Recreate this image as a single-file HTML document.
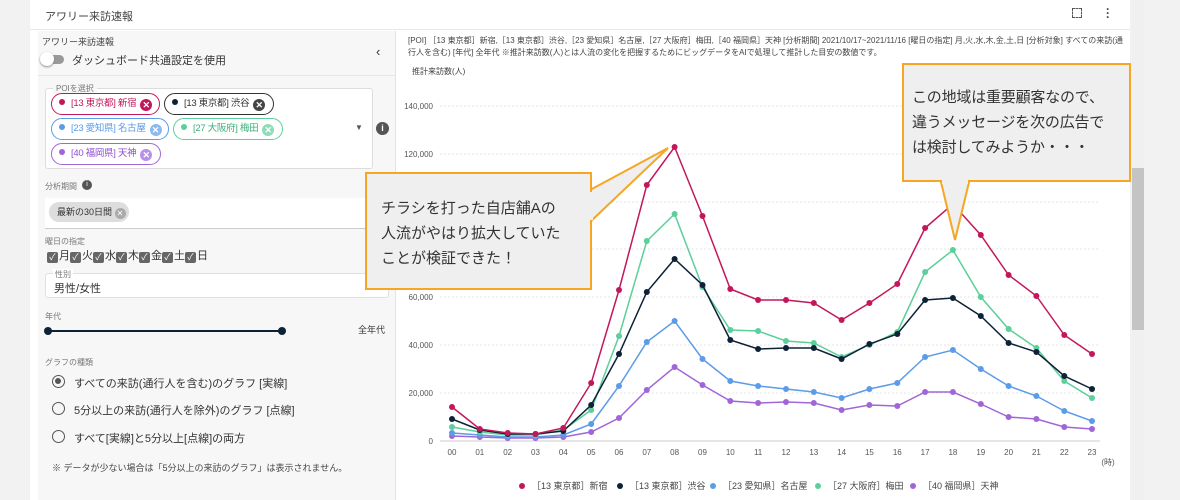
<!DOCTYPE html>
<html><head><meta charset="utf-8"><style>
*{box-sizing:border-box;margin:0;padding:0}
body{width:1180px;height:500px;background:#f2f2f2;font-family:"Liberation Sans","Noto Sans CJK JP",sans-serif;color:#333;position:relative;overflow:hidden}
.a{position:absolute}
.card{left:30px;top:0;width:1100px;height:500px;background:#fff}
.side{left:38px;top:31px;width:357px;height:469px;background:#f7f7f7}
.chip{position:absolute;height:22px;border-radius:11px;font-size:9.5px;line-height:20px;padding:0 5px 0 7px;border:1px solid;background:#fff;white-space:nowrap;letter-spacing:-0.3px}
.chip i{display:inline-block;width:6px;height:6px;border-radius:50%;margin-right:6px;vertical-align:1px}
.chip b{display:inline-block;width:12px;height:12px;border-radius:50%;color:#fff;font-size:9px;line-height:12px;text-align:center;margin-left:4px;vertical-align:-2px;letter-spacing:0}
.lbl{font-size:8px;color:#777}
.cb{display:inline-block;width:11px;height:11px;background:#666;border-radius:2px;color:#fff;font-size:9px;line-height:11px;text-align:center;margin-right:1px;vertical-align:-1px}
.rad{position:absolute;left:52px;width:13px;height:13px;border:1.5px solid #555;border-radius:50%}
.rt{position:absolute;left:74px;font-size:11px;color:#333}
.bub{background:#efefef;border:2px solid #f5a623;font-size:15px;line-height:25px;color:#333}
</style></head><body>
<div class="a card"></div>
<div class="a" style="left:45px;top:8px;font-size:11px;color:#444">アワリー来訪速報</div>
<div class="a" style="left:30px;top:29px;width:1100px;height:1px;background:#e8e8e8"></div>
<div class="a" style="left:1072px;top:8px;width:10px;height:10px;border:1.5px dashed #555"></div>
<div class="a" style="left:1106px;top:7px;font-size:12px;line-height:4px;color:#444;font-weight:bold">·<br>·<br>·</div>
<div class="a" style="left:1132px;top:0;width:12px;height:500px;background:#f0f0f0"></div>
<div class="a" style="left:1132px;top:168px;width:12px;height:162px;background:#c4c4c4"></div>
<div class="a side"></div>
<div class="a" style="left:395px;top:31px;width:1px;height:469px;background:#e3e3e3"></div>
<div class="a" style="left:42px;top:35px;font-size:9px;color:#444">アワリー来訪速報</div>
<div class="a" style="left:42px;top:55px;width:22px;height:9px;border-radius:5px;background:#999"></div>
<div class="a" style="left:40px;top:52px;width:14px;height:14px;border-radius:50%;background:#fff;box-shadow:0 1px 2px #888"></div>
<div class="a" style="left:72px;top:52px;font-size:11px;color:#333">ダッシュボード共通設定を使用</div>
<div class="a" style="left:376px;top:44px;font-size:13px;color:#333">‹</div>
<div class="a" style="left:38px;top:75px;width:357px;height:1px;background:#e6e6e6"></div>
<div class="a" style="left:45px;top:88px;width:328px;height:81px;border:1px solid #ddd;background:#fff;border-radius:3px"></div>
<div class="a lbl" style="left:53px;top:83px;background:#f7f7f7;padding:0 3px">POIを選択</div>
<div class="chip" style="left:51px;top:93px;width:109px;border-color:#c2185b;color:#c2185b"><i style="background:#c2185b"></i>[13 東京都] 新宿<b style="background:#c2185b">✕</b></div>
<div class="chip" style="left:164px;top:93px;width:110px;border-color:#333;color:#333"><i style="background:#0d2137"></i>[13 東京都] 渋谷<b style="background:#444">✕</b></div>
<div class="chip" style="left:51px;top:118px;width:118px;border-color:#5b9be8;color:#5b9be8"><i style="background:#5b9be8"></i>[23 愛知県] 名古屋<b style="background:#8bb9f0">✕</b></div>
<div class="chip" style="left:173px;top:118px;width:110px;border-color:#5ccf9a;color:#3cae7a"><i style="background:#5ccf9a"></i>[27 大阪府] 梅田<b style="background:#8fdcb8">✕</b></div>
<div class="chip" style="left:51px;top:143px;width:110px;border-color:#a066d8;color:#9050d0"><i style="background:#a066d8"></i>[40 福岡県] 天神<b style="background:#b890e5">✕</b></div>
<div class="a" style="left:355px;top:123px;font-size:8px;color:#555">▼</div>
<div class="a" style="left:376px;top:122px;width:13px;height:13px;border-radius:50%;background:#555;color:#fff;font-size:9px;line-height:13px;text-align:center;font-weight:bold">i</div>
<div class="a lbl" style="left:45px;top:181px">分析期間</div>
<div class="a" style="left:82px;top:180px;width:10px;height:10px;border-radius:50%;background:#555;color:#fff;font-size:7px;line-height:10px;text-align:center">i</div>
<div class="a" style="left:45px;top:198px;width:344px;height:31px;background:#fff;border-bottom:1px solid #ccc"></div>
<div class="a" style="left:49px;top:202px;width:80px;height:20px;border-radius:10px;background:#ddd;font-size:9px;line-height:20px;padding-left:8px;color:#333">最新の30日間 <span style="display:inline-block;width:11px;height:11px;border-radius:50%;background:#aaa;color:#fff;font-size:8px;line-height:11px;text-align:center;vertical-align:-1px">✕</span></div>
<div class="a lbl" style="left:45px;top:236px">曜日の指定</div>
<div class="a" style="left:47px;top:247px;font-size:11px;color:#333;white-space:nowrap"><span class="cb">✓</span>月<span class="cb">✓</span>火<span class="cb">✓</span>水<span class="cb">✓</span>木<span class="cb">✓</span>金<span class="cb">✓</span>土<span class="cb">✓</span>日</div>
<div class="a" style="left:45px;top:273px;width:344px;height:25px;background:#fff;border:1px solid #e0e0e0;border-radius:3px"></div>
<div class="a lbl" style="left:53px;top:269px;background:#fff;padding:0 2px">性別</div>
<div class="a" style="left:54px;top:280px;font-size:11px;color:#333">男性/女性</div>
<div class="a lbl" style="left:45px;top:311px">年代</div>
<div class="a" style="left:48px;top:330px;width:234px;height:2px;background:#0d2137"></div>
<div class="a" style="left:44px;top:327px;width:8px;height:8px;border-radius:50%;background:#0d2137"></div>
<div class="a" style="left:278px;top:327px;width:8px;height:8px;border-radius:50%;background:#0d2137"></div>
<div class="a" style="left:358px;top:323px;font-size:9px;color:#333">全年代</div>
<div class="a lbl" style="left:45px;top:357px">グラフの種類</div>
<div class="rad" style="top:375px"><div style="width:6px;height:6px;border-radius:50%;background:#555;margin:2px"></div></div>
<div class="rt" style="top:375px">すべての来訪(通行人を含む)のグラフ [実線]</div>
<div class="rad" style="top:402px"></div>
<div class="rt" style="top:402px">5分以上の来訪(通行人を除外)のグラフ [点線]</div>
<div class="rad" style="top:430px"></div>
<div class="rt" style="top:430px">すべて[実線]と5分以上[点線]の両方</div>
<div class="a" style="left:52px;top:461px;font-size:9px;color:#444">※ データが少ない場合は「5分以上の来訪のグラフ」は表示されません。</div>
<div class="a" style="left:408px;top:35px;width:720px;font-size:8px;line-height:12px;color:#444">[POI] ［13 東京都］新宿,［13 東京都］渋谷,［23 愛知県］名古屋,［27 大阪府］梅田,［40 福岡県］天神 [分析期間] 2021/10/17~2021/11/16 [曜日の指定] 月,火,水,木,金,土,日 [分析対象] すべての来訪(通行人を含む) [年代] 全年代 ※推計来訪数(人)とは人流の変化を把握するためにビッグデータをAIで処理して推計した目安の数値です。</div>
<div class="a" style="left:412px;top:66px;font-size:8px;color:#444">推計来訪数(人)</div>
<svg class="a" style="left:0;top:0" width="1180" height="500" font-family="Liberation Sans,sans-serif">
<defs>
<marker id="mr" markerWidth="6" markerHeight="6" refX="3" refY="3"><circle cx="3" cy="3" r="2" fill="#c2185b"/></marker>
<marker id="mk" markerWidth="6" markerHeight="6" refX="3" refY="3"><circle cx="3" cy="3" r="2" fill="#0d2137"/></marker>
<marker id="mb" markerWidth="6" markerHeight="6" refX="3" refY="3"><circle cx="3" cy="3" r="2" fill="#5b9be8"/></marker>
<marker id="mg" markerWidth="6" markerHeight="6" refX="3" refY="3"><circle cx="3" cy="3" r="2" fill="#5ccf9a"/></marker>
<marker id="mp" markerWidth="6" markerHeight="6" refX="3" refY="3"><circle cx="3" cy="3" r="2" fill="#a066d8"/></marker>
</defs>
<g stroke="#e6e6e6" stroke-dasharray="2,2">
<line x1="440" x2="1100" y1="106" y2="106"/><line x1="440" x2="1100" y1="154" y2="154"/><line x1="440" x2="1100" y1="202" y2="202"/><line x1="440" x2="1100" y1="249" y2="249"/><line x1="440" x2="1100" y1="297" y2="297"/><line x1="440" x2="1100" y1="345" y2="345"/><line x1="440" x2="1100" y1="393" y2="393"/>
</g>
<line x1="440" x2="1100" y1="441" y2="441" stroke="#ccc"/>
<g font-size="8" fill="#555" text-anchor="end">
<text x="433" y="109">140,000</text><text x="433" y="157">120,000</text><text x="433" y="300">60,000</text><text x="433" y="348">40,000</text><text x="433" y="396">20,000</text><text x="433" y="444">0</text>
</g>
<g font-size="8" fill="#555" text-anchor="middle">
<text x="452" y="455">00</text><text x="479.8" y="455">01</text><text x="507.7" y="455">02</text><text x="535.5" y="455">03</text><text x="563.3" y="455">04</text><text x="591.2" y="455">05</text><text x="619" y="455">06</text><text x="646.8" y="455">07</text><text x="674.6" y="455">08</text><text x="702.5" y="455">09</text><text x="730.3" y="455">10</text><text x="758.1" y="455">11</text><text x="786" y="455">12</text><text x="813.8" y="455">13</text><text x="841.6" y="455">14</text><text x="869.4" y="455">15</text><text x="897.3" y="455">16</text><text x="925.1" y="455">17</text><text x="952.9" y="455">18</text><text x="980.8" y="455">19</text><text x="1008.6" y="455">20</text><text x="1036.4" y="455">21</text><text x="1064.3" y="455">22</text><text x="1092" y="455">23</text><text x="1108" y="465">(時)</text>
</g>
<g fill="none" stroke-width="1.5">
<polyline stroke="#a066d8" marker-start="url(#mp)" marker-mid="url(#mp)" marker-end="url(#mp)" points="452,436 479.8,437 507.7,438 535.5,438 563.3,437 591.2,432 619,418 646.8,390 674.6,367 702.5,385 730.3,401 758.1,403 786,402 813.8,403 841.6,410 869.4,405 897.3,406 925.1,392 952.9,392 980.8,404 1008.6,417 1036.4,419 1064.3,427 1092,429"/>
<polyline stroke="#5b9be8" marker-start="url(#mb)" marker-mid="url(#mb)" marker-end="url(#mb)" points="452,433 479.8,435 507.7,437 535.5,437 563.3,435 591.2,424 619,386 646.8,342 674.6,321 702.5,359 730.3,381 758.1,386 786,389 813.8,392 841.6,398 869.4,389 897.3,383 925.1,357 952.9,350 980.8,369 1008.6,386 1036.4,396 1064.3,411 1092,421"/>
<polyline stroke="#5ccf9a" marker-start="url(#mg)" marker-mid="url(#mg)" marker-end="url(#mg)" points="452,427 479.8,432 507.7,435 535.5,435 563.3,430 591.2,410 619,336 646.8,241 674.6,214 702.5,287 730.3,330 758.1,331 786,341 813.8,343 841.6,357 869.4,345 897.3,332 925.1,272 952.9,250 980.8,297 1008.6,329 1036.4,348 1064.3,381 1092,398"/>
<polyline stroke="#0d2137" marker-start="url(#mk)" marker-mid="url(#mk)" marker-end="url(#mk)" points="452,419 479.8,430 507.7,434 535.5,434 563.3,431 591.2,405 619,354 646.8,292 674.6,259 702.5,285 730.3,340 758.1,349 786,348 813.8,348 841.6,359 869.4,344 897.3,334 925.1,300 952.9,298 980.8,316 1008.6,343 1036.4,352 1064.3,376 1092,389"/>
<polyline stroke="#c2185b" marker-start="url(#mr)" marker-mid="url(#mr)" marker-end="url(#mr)" points="452,407 479.8,429 507.7,433 535.5,434 563.3,428 591.2,383 619,290 646.8,185 674.6,147 702.5,216 730.3,289 758.1,300 786,300 813.8,303 841.6,320 869.4,303 897.3,284 925.1,228 952.9,204 980.8,235 1008.6,275 1036.4,296 1064.3,335 1092,354"/>
</g>
<g font-size="9" fill="#444">
<circle cx="522" cy="486" r="3" fill="#c2185b"/><text x="532" y="489">［13 東京都］新宿</text>
<circle cx="620" cy="486" r="3" fill="#0d2137"/><text x="630" y="489">［13 東京都］渋谷</text>
<circle cx="713" cy="486" r="3" fill="#5b9be8"/><text x="723" y="489">［23 愛知県］名古屋</text>
<circle cx="818" cy="486" r="3" fill="#5ccf9a"/><text x="828" y="489">［27 大阪府］梅田</text>
<circle cx="913" cy="486" r="3" fill="#a066d8"/><text x="923" y="489">［40 福岡県］天神</text>
</g>
<polygon points="590,190 668,148 590,222" fill="#efefef" stroke="#f5a623" stroke-width="2"/>
<polygon points="940,178 955,240 970,178" fill="#efefef" stroke="#f5a623" stroke-width="2"/>
</svg>
<div class="a bub" style="left:365px;top:172px;width:227px;height:118px;padding:22px 0 0 14px">チラシを打った自店舗Aの<br>人流がやはり拡大していた<br>ことが検証できた！</div>
<div class="a bub" style="left:902px;top:63px;width:229px;height:119px;padding:20px 0 0 8px;letter-spacing:-0.2px">この地域は重要顧客なので、<br>違うメッセージを次の広告で<br>は検討してみようか・・・</div>
<div class="a" style="left:587px;top:192px;width:6px;height:28px;background:#efefef"></div>
<div class="a" style="left:942px;top:178px;width:26px;height:6px;background:#efefef"></div>
</body></html>
